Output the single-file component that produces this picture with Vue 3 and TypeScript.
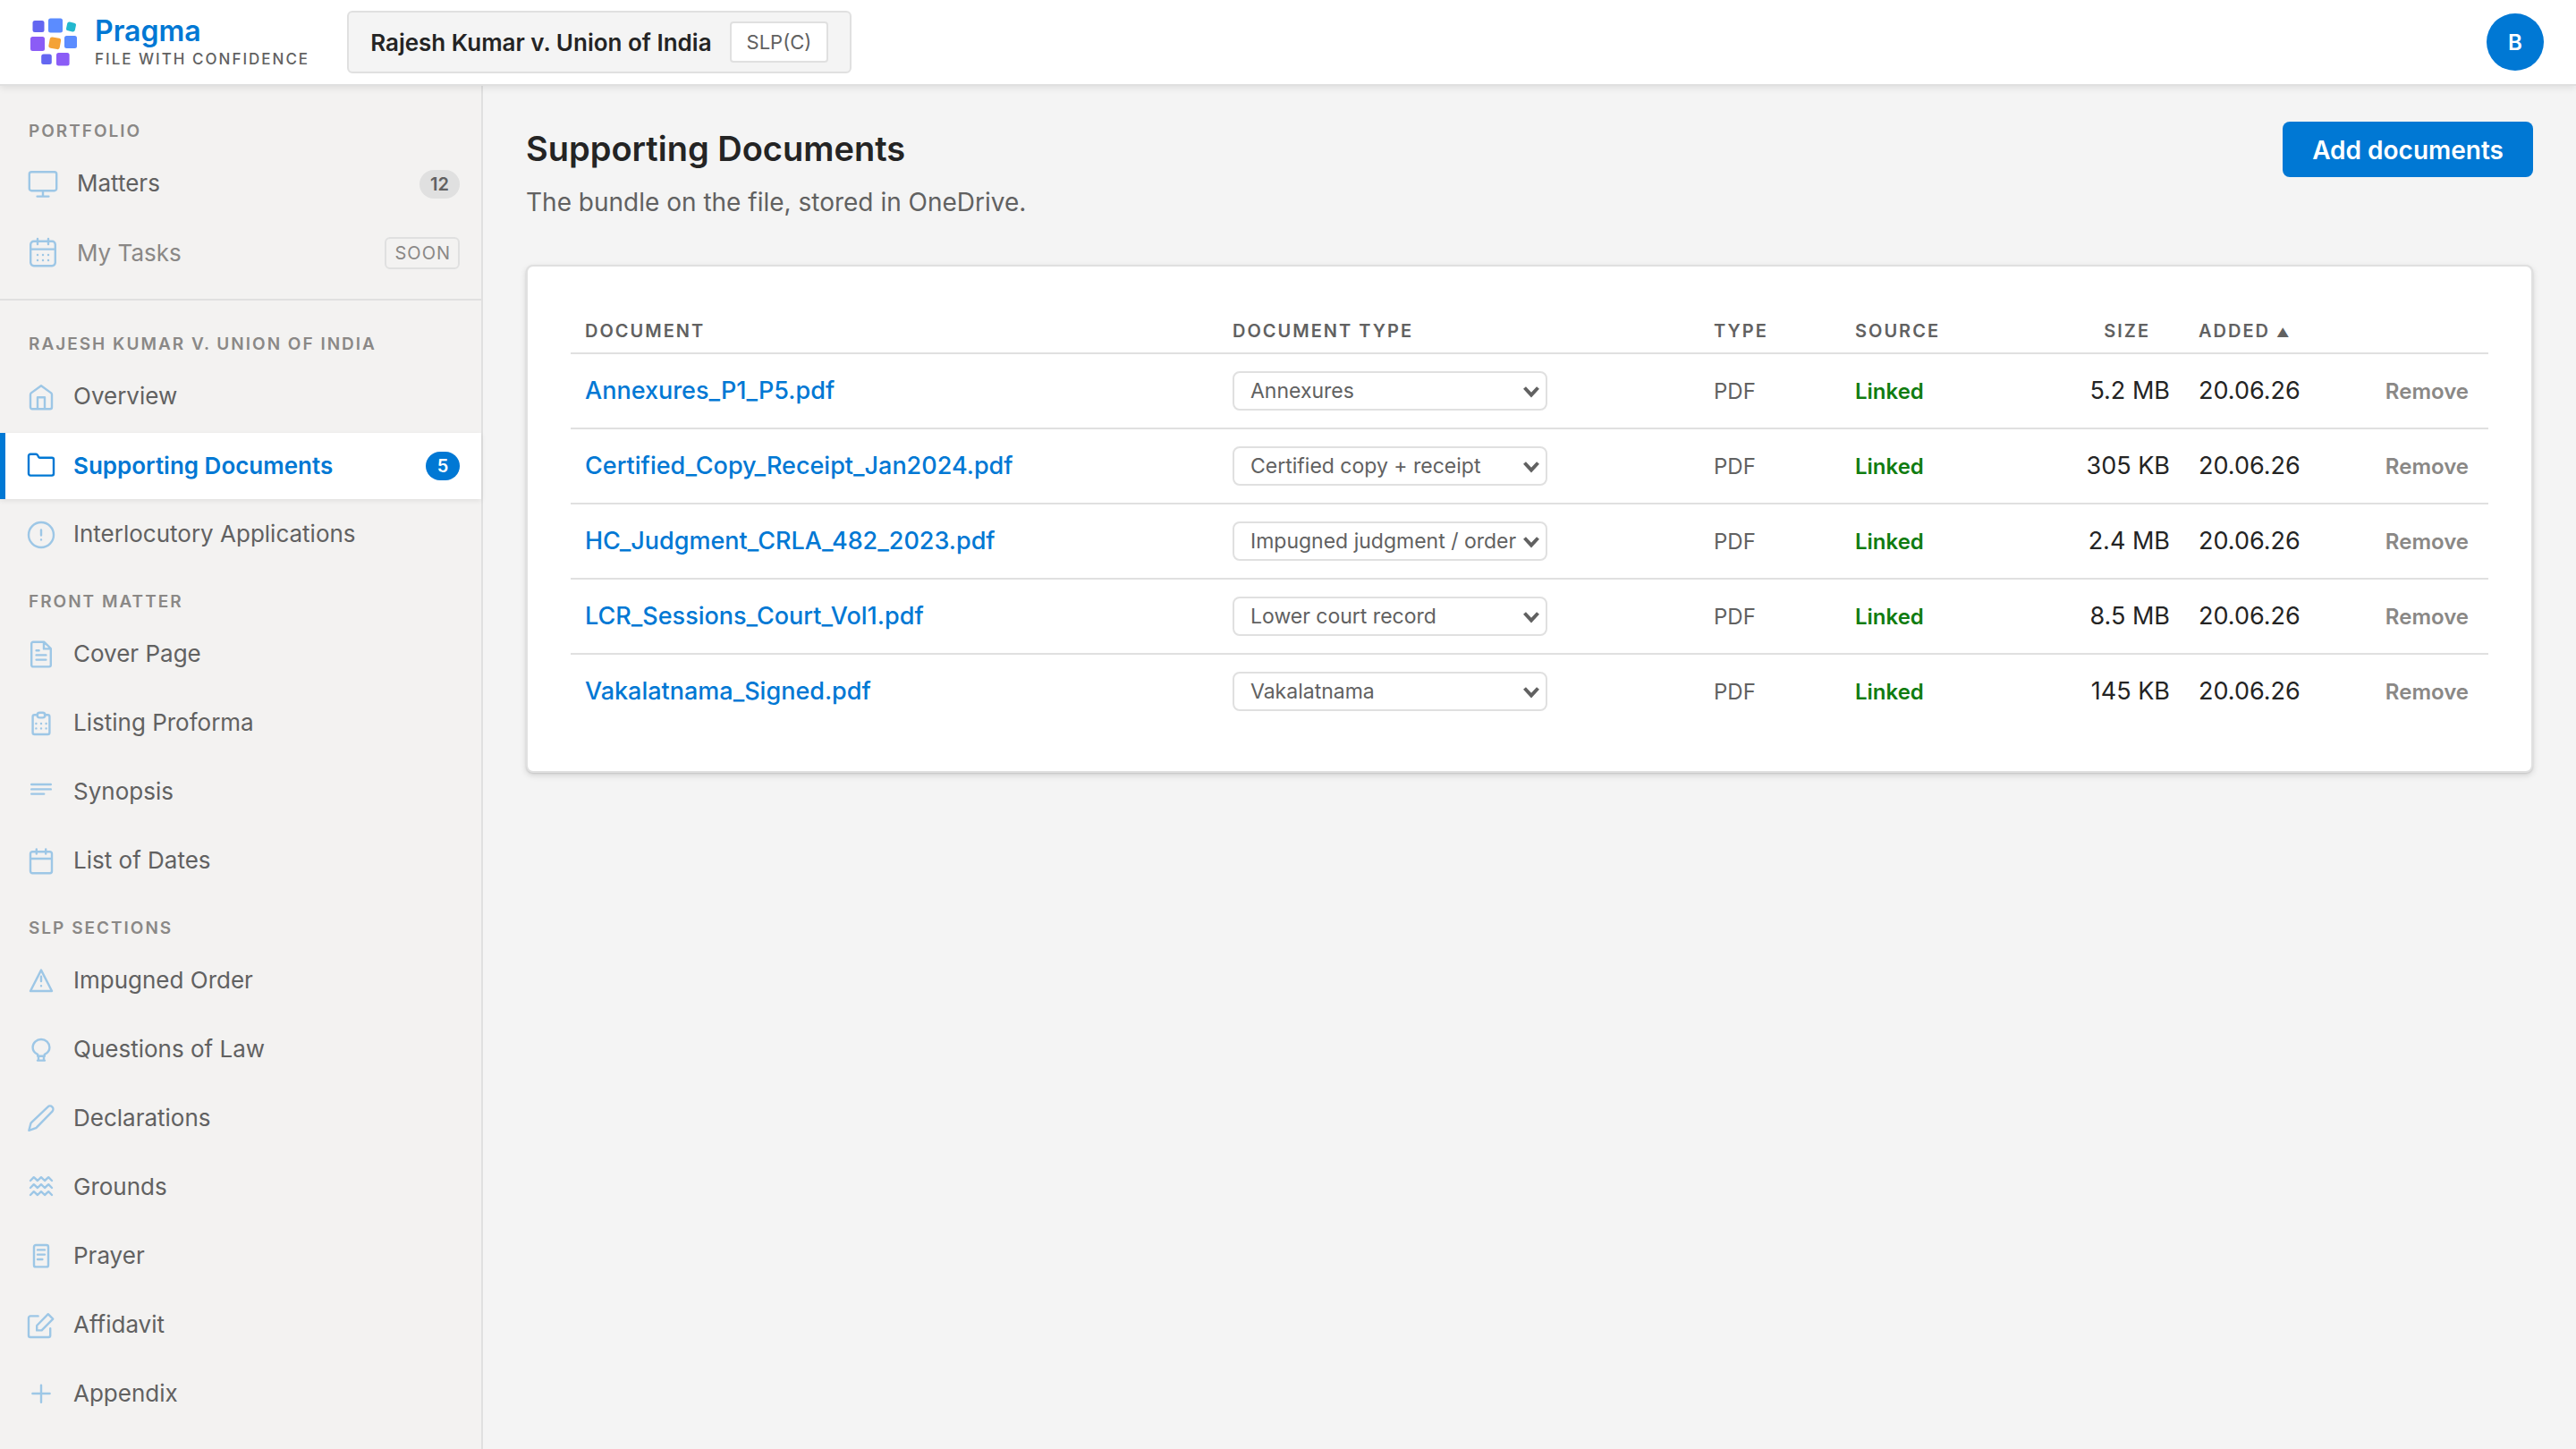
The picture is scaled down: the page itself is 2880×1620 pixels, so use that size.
<script setup lang="ts">
import { ref } from 'vue'

interface NavItem {
  label: string
  icon: string
  count?: number
  soon?: boolean
  active?: boolean
}

interface NavGroup {
  title: string
  items: NavItem[]
}

interface DocumentRow {
  name: string
  category: string
  size: string
  added: string
}

const portfolio: NavGroup = {
  title: 'Portfolio',
  items: [
    {
      label: 'Matters',
      icon: 'M2.6 2.1h12.8a1.2 1.2 0 0 1 1.2 1.2v8.1a1.2 1.2 0 0 1-1.2 1.2H2.6a1.2 1.2 0 0 1-1.2-1.2V3.3a1.2 1.2 0 0 1 1.2-1.2zM9 12.6v3.2M5.8 15.8h6.4',
      count: 12,
    },
    {
      label: 'My Tasks',
      icon: 'M3.9 2.4h10.2a1.8 1.8 0 0 1 1.8 1.8v10.1a1.8 1.8 0 0 1-1.8 1.8H3.9a1.8 1.8 0 0 1-1.8-1.8V4.2a1.8 1.8 0 0 1 1.8-1.8zM2.1 6.8h13.8M6 1v3M12 1v3M6 10h.01M9 10h.01M12 10h.01M6 13h.01M9 13h.01M12 13h.01',
      soon: true,
    },
  ],
}

const matterGroups: NavGroup[] = [
  {
    title: 'Rajesh Kumar v. Union of India',
    items: [
      {
        label: 'Overview',
        icon: 'M2 6.6a1.2 1.2 0 0 1 .4-.9L8 1.6l5.6 4.1a1.2 1.2 0 0 1 .4.9v7a1 1 0 0 1-1 1H3a1 1 0 0 1-1-1zM6 14.6V8.1h4v6.5',
      },
      {
        label: 'Supporting Documents',
        icon: 'M1 2.4a1 1 0 0 1 1-1h3.1a1 1 0 0 1 .9.5l.6 1.1a1 1 0 0 0 .8.4H14a1 1 0 0 1 1 1v7.9a1 1 0 0 1-1 1H2a1 1 0 0 1-1-1z',
        count: 5,
        active: true,
      },
      {
        label: 'Interlocutory Applications',
        icon: 'M15 8A7 7 0 1 1 1 8a7 7 0 0 1 14 0zM8 5.2v3M8 10.7h.01',
      },
    ],
  },
  {
    title: 'Front matter',
    items: [
      {
        label: 'Cover Page',
        icon: 'M3.5.9h6.2l3.7 3.6v9.3a.9.9 0 0 1-.9.9h-9a.9.9 0 0 1-.9-.9v-12a.9.9 0 0 1 .9-.9zM9.5 1v3.7h3.8M5.3 5.6h1.5M5.3 8.2h5.4M5.3 10.8h5.4',
      },
      {
        label: 'Listing Proforma',
        icon: 'M6 3.1H4.3a1 1 0 0 0-1 1V13a1 1 0 0 0 1 1h7.4a1 1 0 0 0 1-1V4.1a1 1 0 0 0-1-1H10M7.2 1.9h1.6a1.4 1.4 0 0 1 0 2.8H7.2a1.4 1.4 0 0 1 0-2.8zM5.2 8h.01M8 8h.01M10.8 8h.01M5.2 10.7h.01M8 10.7h.01M10.8 10.7h.01',
      },
      { label: 'Synopsis', icon: 'M2.6 3.5h10.8M2.6 6.2h10.8M2.6 8.8h7' },
      {
        label: 'List of Dates',
        icon: 'M3.1 2.6h9.8a1.1 1.1 0 0 1 1.1 1.1v9.8a1.1 1.1 0 0 1-1.1 1.1H3.1A1.1 1.1 0 0 1 2 13.5V3.7a1.1 1.1 0 0 1 1.1-1.1zM2 6.5h12M5.4 1.2v2.6M10.6 1.2v2.6',
      },
    ],
  },
  {
    title: 'SLP sections',
    items: [
      { label: 'Impugned Order', icon: 'M8 1.8l6 11.7H2zM8 5.4v2.6M8 10.6h.01' },
      {
        label: 'Questions of Law',
        icon: 'M6.1 11.4v-1C4.3 9.6 3.3 8.3 3.3 6.5a4.7 4.5 0 0 1 9.4 0c0 1.8-1 3.1-2.8 3.9v1zM6.5 11.4v2.4M9.5 11.4v2.4M6 13.8h4',
      },
      {
        label: 'Declarations',
        icon: 'M1.2 14.4l1-3.9a1.6 1.6 0 0 1 .4-.6l9.1-8.6a1.75 1.75 0 0 1 2.5 2.5l-8.8 9a1.6 1.6 0 0 1-.7.4z',
      },
      {
        label: 'Grounds',
        icon: 'M2 4l1.9-1.9L6 4l2-1.9L10 4l2.1-1.9L14 4M2 8l1.9-1.9L6 8l2-1.9L10 8l2.1-1.9L14 8M2 12l1.9-1.9L6 12l2-1.9 2 1.9 2.1-1.9L14 12',
      },
      {
        label: 'Prayer',
        icon: 'M5 1.5h6a1 1 0 0 1 1 1v10.2a1 1 0 0 1-1 1H5a1 1 0 0 1-1-1V2.5a1 1 0 0 1 1-1zM6 4.2h4M6 6.8h4M6 9.5h2.7',
      },
      {
        label: 'Affidavit',
        icon: 'M6.3 2.7H2a1 1 0 0 0-1 1v9.8a1 1 0 0 0 1 1h10.1a1 1 0 0 0 1-1V9.6M5.6 10.7V8l6.3-6.4 2.7 2.7-6.3 6.4z',
      },
      { label: 'Appendix', icon: 'M8 2.8v9.6M3.2 7.5h9.6' },
    ],
  },
]

const categories: string[] = [
  'Annexures',
  'Certified copy + receipt',
  'Impugned judgment / order',
  'Lower court record',
  'Vakalatnama',
]

const documents = ref<DocumentRow[]>([
  { name: 'Annexures_P1_P5.pdf', category: 'Annexures', size: '5.2 MB', added: '20.06.26' },
  { name: 'Certified_Copy_Receipt_Jan2024.pdf', category: 'Certified copy + receipt', size: '305 KB', added: '20.06.26' },
  { name: 'HC_Judgment_CRLA_482_2023.pdf', category: 'Impugned judgment / order', size: '2.4 MB', added: '20.06.26' },
  { name: 'LCR_Sessions_Court_Vol1.pdf', category: 'Lower court record', size: '8.5 MB', added: '20.06.26' },
  { name: 'Vakalatnama_Signed.pdf', category: 'Vakalatnama', size: '145 KB', added: '20.06.26' },
])

function removeDocument(name: string): void {
  documents.value = documents.value.filter((d) => d.name !== name)
}
</script>

<template>
  <div class="app">
    <header class="topbar">
      <a class="brand" href="#">
        <svg class="logo" viewBox="0 0 56 56" aria-hidden="true">
          <rect x="4.5" y="4" width="13" height="13" rx="2.5" fill="#6366f1" />
          <rect x="22" y="1.5" width="16" height="16" rx="2.5" fill="#5b8cff" />
          <rect x="42.5" y="6" width="10" height="10" rx="2.5" fill="#22b8cf" transform="rotate(12 47.5 11)" />
          <rect x="2" y="22" width="16" height="16" rx="2.5" fill="#8b5cf6" />
          <rect x="23" y="23" width="12.5" height="12.5" rx="2.5" fill="#f4a236" transform="rotate(10 29.2 29.2)" />
          <rect x="40" y="21" width="14" height="14" rx="2.5" fill="#5b8cff" />
          <rect x="14.2" y="41.5" width="11.6" height="11.6" rx="2.5" fill="#6366f1" />
          <rect x="31" y="40" width="14.6" height="14.6" rx="2.5" fill="#8b5cf6" />
        </svg>
        <span class="brand-text">
          <span class="brand-name">Pragma</span>
          <span class="tagline">File with confidence</span>
        </span>
      </a>
      <button class="matter" type="button">
        <span>Rajesh Kumar v. Union of India</span>
        <span class="matter-kind">SLP(C)</span>
      </button>
      <button class="avatar" type="button" aria-label="Account">B</button>
    </header>

    <div class="body">
      <nav class="sidebar">
        <section class="group portfolio">
          <h2 class="group-title">{{ portfolio.title }}</h2>
          <a
            v-for="item in portfolio.items"
            :key="item.label"
            class="nav-item"
            :class="{ soon: item.soon }"
            href="#"
          >
            <svg class="icon wide" viewBox="0 0 18 18" aria-hidden="true"><path :d="item.icon" /></svg>
            <span class="nav-label">{{ item.label }}</span>
            <span v-if="item.count" class="count">{{ item.count }}</span>
            <span v-if="item.soon" class="soon-tag">Soon</span>
          </a>
        </section>
        <div class="matter-nav">
          <section v-for="group in matterGroups" :key="group.title" class="group">
            <h2 class="group-title">{{ group.title }}</h2>
            <a
              v-for="item in group.items"
              :key="item.label"
              class="nav-item"
              :class="{ active: item.active }"
              href="#"
            >
              <svg class="icon" viewBox="0 0 16 16" aria-hidden="true"><path :d="item.icon" /></svg>
              <span class="nav-label">{{ item.label }}</span>
              <span v-if="item.count" class="count">{{ item.count }}</span>
            </a>
          </section>
        </div>
      </nav>

      <main class="content">
        <div class="page-head">
          <div>
            <h1>Supporting Documents</h1>
            <p>The bundle on the file, stored in OneDrive.</p>
          </div>
          <button class="primary" type="button">Add documents</button>
        </div>

        <div class="card">
          <table>
            <colgroup>
              <col />
              <col class="col-category" />
              <col class="col-type" />
              <col class="col-source" />
              <col class="col-size" />
              <col class="col-added" />
              <col class="col-action" />
            </colgroup>
            <thead>
              <tr>
                <th scope="col">Document</th>
                <th scope="col">Document type</th>
                <th scope="col">Type</th>
                <th scope="col">Source</th>
                <th scope="col" class="num size-head">Size</th>
                <th scope="col" aria-sort="ascending">Added <span class="arrow">▲</span></th>
                <td></td>
              </tr>
            </thead>
            <tbody>
              <tr v-for="doc in documents" :key="doc.name">
                <td><a class="doc-link" href="#">{{ doc.name }}</a></td>
                <td class="category">
                  <span class="select">
                    <select v-model="doc.category" :aria-label="`Document type for ${doc.name}`">
                      <option v-for="c in categories" :key="c" :value="c">{{ c }}</option>
                    </select>
                    <svg class="chevron" viewBox="0 0 20 14" aria-hidden="true"><path d="M2.5 2.5l7.5 8 7.5-8" /></svg>
                  </span>
                </td>
                <td class="type">PDF</td>
                <td class="linked">Linked</td>
                <td class="num">{{ doc.size }}</td>
                <td>{{ doc.added }}</td>
                <td class="num">
                  <button class="remove" type="button" @click="removeDocument(doc.name)">Remove</button>
                </td>
              </tr>
            </tbody>
          </table>
        </div>
      </main>
    </div>
  </div>
</template>

<style>
body {
  background: #f4f4f4;
}
</style>

<style scoped>
.app {
  min-height: 100vh;
  display: flex;
  flex-direction: column;
  font-family: Inter, 'Liberation Sans', sans-serif;
  font-size: 26px;
  color: #242424;
}
.app *,
.app {
  box-sizing: border-box;
}
a {
  text-decoration: none;
  color: inherit;
}
button,
select {
  font: inherit;
  color: inherit;
  cursor: pointer;
}
h1,
h2,
p {
  margin: 0;
}

/* Top bar */
.topbar {
  position: relative;
  display: flex;
  align-items: center;
  height: 96px;
  padding: 0 36px 0 32px;
  background: #fff;
  border-bottom: 2px solid #e0e0e0;
  box-shadow: 0 3px 7px rgba(0, 0, 0, 0.08);
}
.brand {
  display: flex;
  align-items: center;
  gap: 18px;
  margin-right: 42px;
}
.logo {
  width: 56px;
  height: 56px;
}
.brand-text {
  display: flex;
  flex-direction: column;
}
.brand-name {
  font-size: 32px;
  line-height: 38px;
  font-weight: 600;
  color: #0078d4;
}
.tagline {
  font-size: 17px;
  line-height: 24px;
  font-weight: 500;
  letter-spacing: 2px;
  text-transform: uppercase;
  color: #616161;
}
.matter {
  display: flex;
  align-items: center;
  gap: 20px;
  height: 70px;
  padding: 0 24px;
  font-weight: 600;
  background: #f4f4f4;
  border: 2px solid #e0e0e0;
  border-radius: 6px;
}
.matter-kind {
  padding: 0 17px;
  font-size: 22px;
  line-height: 42px;
  font-weight: 400;
  color: #616161;
  background: #fff;
  border: 2px solid #e0e0e0;
  border-radius: 4px;
}
.avatar {
  width: 64px;
  height: 64px;
  margin-left: auto;
  padding: 0;
  font-size: 24px;
  font-weight: 600;
  color: #fff;
  background: #0078d4;
  border: 0;
  border-radius: 50%;
}

.body {
  flex: 1;
  display: flex;
}

/* Sidebar */
.sidebar {
  flex: none;
  width: 540px;
  background: #f3f2f1;
  border-right: 2px solid #e0e0e0;
}
.portfolio {
  padding: 13px 0 11px;
  border-bottom: 2px solid #e0e0e0;
}
.matter-nav {
  padding-top: 11px;
}
.group-title {
  padding: 23px 32px 7px;
  font-size: 19px;
  line-height: 30px;
  font-weight: 600;
  letter-spacing: 2px;
  text-transform: uppercase;
  color: #8a8886;
}
.nav-item {
  display: flex;
  align-items: center;
  gap: 20px;
  height: 74px;
  margin-bottom: 3px;
  padding: 0 24px;
  border-left: 6px solid transparent;
  color: #616161;
}
.matter-nav .nav-item:last-child {
  margin-bottom: 0;
}
.nav-item.soon {
  color: #8a8886;
}
.nav-item.active {
  font-weight: 600;
  color: #0078d4;
  background: #fff;
  border-left-color: #0078d4;
  box-shadow: 0 2px 6px rgba(0, 0, 0, 0.08);
}
.nav-label {
  flex: 1;
  padding-bottom: 4px;
}
.active .nav-label,
.soon .nav-label {
  padding-bottom: 2px;
}
.icon {
  flex: none;
  width: 32px;
  height: 32px;
  fill: none;
  stroke: #0078d4;
  stroke-width: 1.2;
  stroke-linecap: round;
  stroke-linejoin: round;
  opacity: 0.35;
}
.icon.wide {
  width: 36px;
  height: 36px;
}
.active .icon {
  opacity: 1;
}
.count {
  min-width: 38px;
  padding: 0 12px;
  font-size: 20px;
  line-height: 32px;
  font-weight: 600;
  text-align: center;
  color: #616161;
  background: #e0e0e0;
  border-radius: 16px;
}
.active .count {
  color: #fff;
  background: #0078d4;
}
.soon-tag {
  padding: 0 8px 0 10px;
  font-size: 20px;
  line-height: 32px;
  letter-spacing: 1px;
  text-transform: uppercase;
  border: 2px solid #e0e0e0;
  border-radius: 6px;
}

/* Content */
.content {
  flex: 1;
  min-width: 0;
  padding: 40px 48px;
}
.page-head {
  display: flex;
  justify-content: space-between;
  align-items: flex-start;
  margin-bottom: 50px;
}
h1 {
  margin-bottom: 10px;
  font-size: 38px;
  line-height: 60px;
  font-weight: 600;
}
.page-head p {
  font-size: 28px;
  line-height: 40px;
  color: #616161;
}
.primary {
  height: 62px;
  padding: 2px 33px 0;
  font-size: 28px;
  font-weight: 600;
  color: #fff;
  background: #0078d4;
  border: 0;
  border-radius: 8px;
}
.card {
  padding: 48px;
  background: #fff;
  border: 2px solid #e0e0e0;
  border-radius: 8px;
  box-shadow:
    0 3px 7px rgba(0, 0, 0, 0.13),
    0 1px 2px rgba(0, 0, 0, 0.11);
}
table {
  width: 100%;
  table-layout: fixed;
  border-collapse: separate;
  border-spacing: 0;
}
.col-category {
  width: 538px;
}
.col-type {
  width: 158px;
}
.col-source {
  width: 192px;
}
.col-size {
  width: 192px;
}
.col-added {
  width: 170px;
}
.col-action {
  width: 170px;
}
th,
td {
  padding: 0 16px;
  text-align: left;
  vertical-align: middle;
  white-space: nowrap;
  border-bottom: 2px solid #e0e0e0;
}
th {
  height: 50px;
  font-size: 20px;
  line-height: 32px;
  font-weight: 600;
  letter-spacing: 2px;
  text-transform: uppercase;
  color: #616161;
}
tbody td {
  height: 84px;
  padding-bottom: 2px;
  font-size: 27px;
}
tbody tr:last-child td {
  height: 82px;
  border-bottom: 0;
}
tbody .category {
  padding-bottom: 0;
}
.num {
  text-align: right;
}
.size-head {
  padding-right: 38px;
}
.arrow {
  font-size: 14px;
  line-height: 16px;
}
.doc-link {
  font-weight: 500;
  color: #0078d4;
}
.select {
  position: relative;
  display: block;
  width: 352px;
}
select {
  display: block;
  width: 100%;
  height: 44px;
  padding: 0 16px 0 18px;
  font-size: 23px;
  color: #616161;
  background: #fff;
  border: 2px solid #e0e0e0;
  border-radius: 8px;
  appearance: none;
}
.chevron {
  position: absolute;
  top: 16px;
  right: 8px;
  width: 20px;
  height: 14px;
  fill: none;
  stroke: #616161;
  stroke-width: 4;
  pointer-events: none;
}
tbody .type {
  padding-bottom: 0;
  font-size: 24px;
  color: #616161;
}
tbody .linked {
  padding-bottom: 0;
  font-size: 24px;
  font-weight: 600;
  color: #107c10;
}
.remove {
  padding: 0 6px;
  font-size: 24px;
  font-weight: 600;
  color: #8a8886;
  background: none;
  border: 0;
}
</style>
